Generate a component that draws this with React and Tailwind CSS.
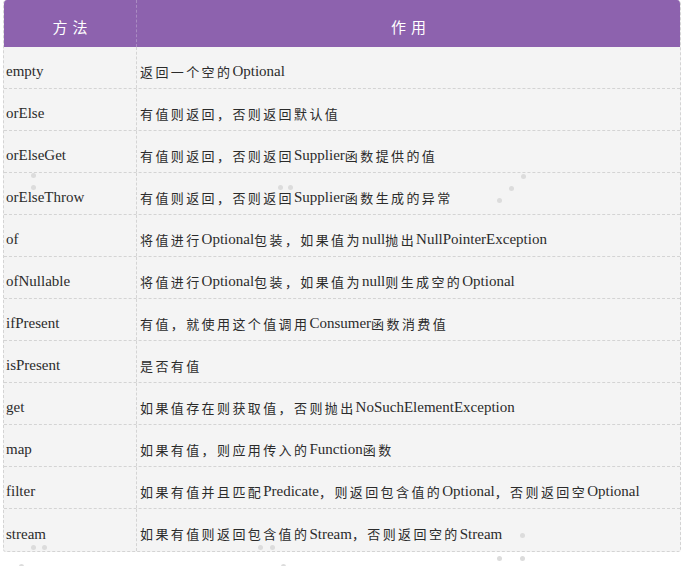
const rows = [
  ['empty', '返回一个空的Optional'],
  ['orElse', '有值则返回，否则返回默认值'],
  ['orElseGet', '有值则返回，否则返回Supplier函数提供的值'],
  ['orElseThrow', '有值则返回，否则返回Supplier函数生成的异常'],
  ['of', '将值进行Optional包装，如果值为null抛出NullPointerException'],
  ['ofNullable', '将值进行Optional包装，如果值为null则生成空的Optional'],
  ['ifPresent', '有值，就使用这个值调用Consumer函数消费值'],
  ['isPresent', '是否有值'],
  ['get', '如果值存在则获取值，否则抛出NoSuchElementException'],
  ['map', '如果有值，则应用传入的Function函数'],
  ['filter', '如果有值并且匹配Predicate，则返回包含值的Optional，否则返回空Optional'],
  ['stream', '如果有值则返回包含值的Stream，否则返回空的Stream'],
];

// faint watermark dots
const dots = [
  [33, 175], [33, 187], [280, 187], [290, 187], [523, 176], [511, 188], [499, 200],
  [33, 547], [44, 547], [21, 566], [260, 547], [272, 547], [283, 566],
  [522, 535], [499, 558], [522, 558],
];

const Mixed = ({ text }) => {
  const parts = text.split(/([\u3000-\u9fff\uff00-\uffef]+)/);
  return (
    <>
      {parts.map((p, i) =>
        /[\u3000-\u9fff\uff00-\uffef]/.test(p) ? (
          <span key={i} className="font-['Noto_Sans_CJK_SC'] text-[13px] tracking-[2.4px]">{p}</span>
        ) : (
          <span key={i} className="font-['Liberation_Serif']">{p}</span>
        ),
      )}
    </>
  );
};

export default function App() {
  return (
    <div className="relative w-[684px] h-[566px] bg-white font-['Liberation_Serif'] text-[15px] text-[#2b2b2b] overflow-hidden">
      <div className="ml-[3px] w-[678px] rounded-t-[4px] rounded-b-[3px] overflow-hidden border-x border-b border-dashed border-[#d4d4d4] bg-[#f4f4f4]">
        <div className="grid grid-cols-[133px_1fr] h-[47px] bg-[#8d62ae] text-white font-['Noto_Sans_CJK_SC']">
          <div className="flex items-center justify-center pt-[8px] border-r border-dashed border-[#a98bc2]">
            <span className="text-[15px] tracking-[5px] pl-[5px]">方法</span>
          </div>
          <div className="flex items-center justify-center pt-[8px]">
            <span className="text-[15px] tracking-[5px] pl-[5px]">作用</span>
          </div>
        </div>
        {rows.map(([name, desc], i) => (
          <div
            key={name}
            className={`grid grid-cols-[133px_1fr] h-[42px] ${i < rows.length - 1 ? 'border-b border-dashed border-[#d4d4d4]' : ''}`}
          >
            <div className="flex items-center pt-[8px] pl-[2px] border-r border-dashed border-[#d4d4d4]">{name}</div>
            <div className="flex items-center pt-[8px] pl-[3px] whitespace-nowrap">
              <Mixed text={desc} />
            </div>
          </div>
        ))}
      </div>
      {dots.map(([x, y], i) => (
        <div
          key={i}
          className="absolute w-[5px] h-[5px] rounded-full bg-[#dcdcdc]"
          style={{ left: x - 2, top: y - 2 }}
        />
      ))}
    </div>
  );
}
